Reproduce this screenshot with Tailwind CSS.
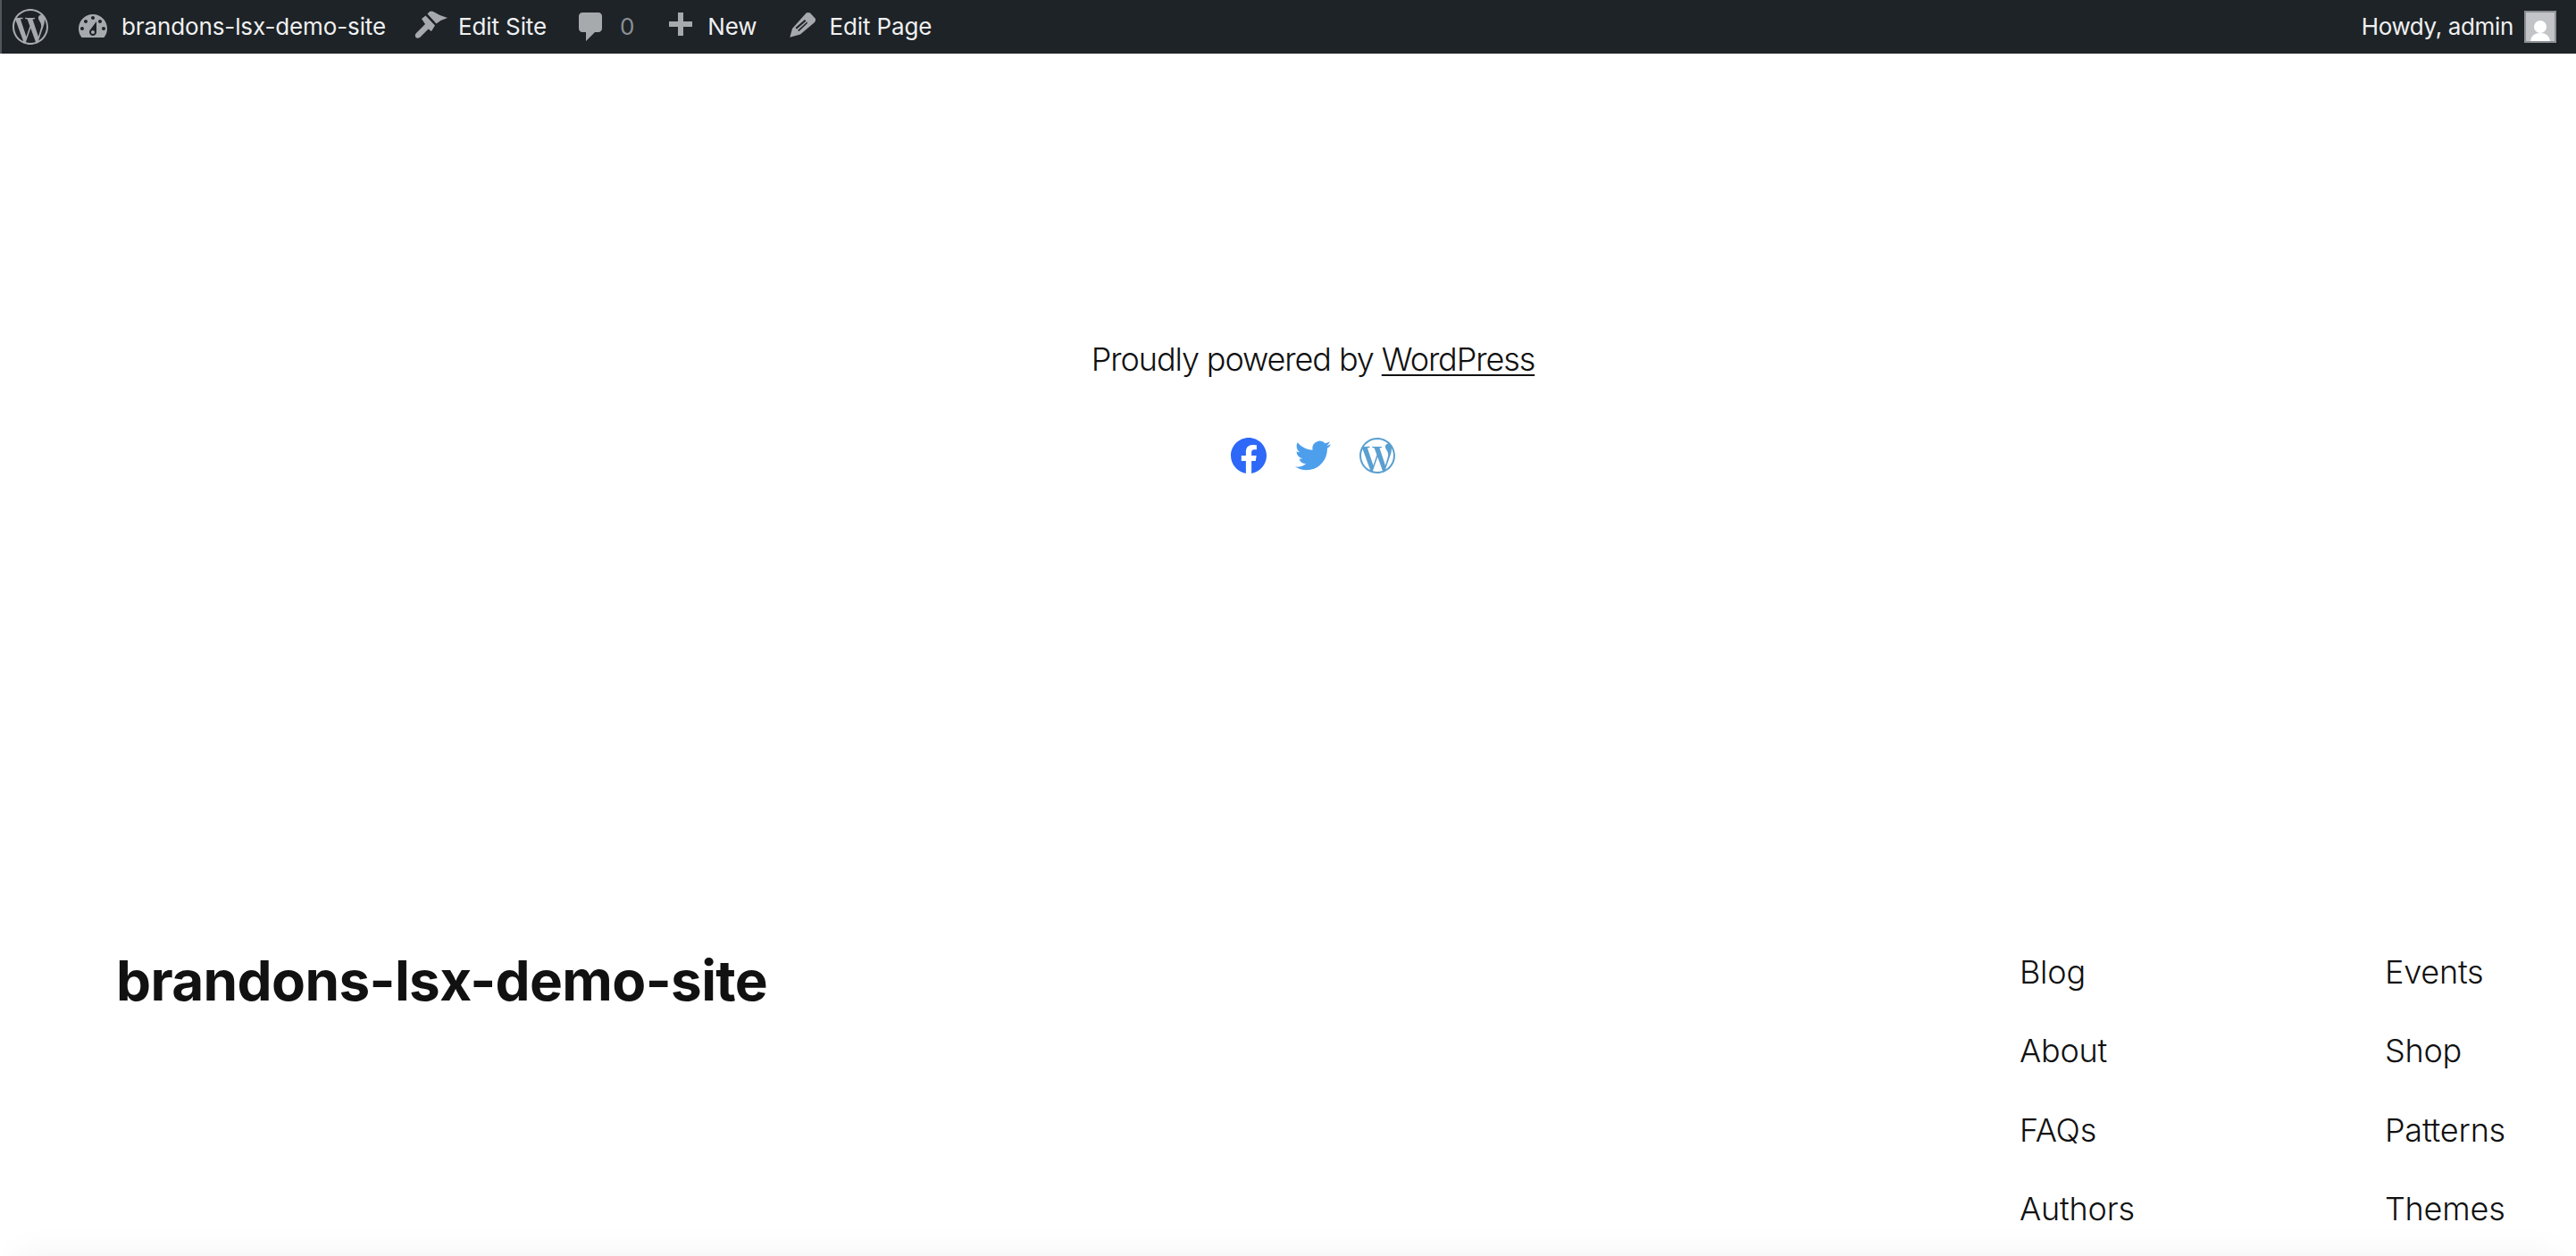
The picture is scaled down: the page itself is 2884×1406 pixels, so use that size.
<!DOCTYPE html>
<html lang="en">
<head>
  <meta charset="UTF-8" />
  <title>brandons-lsx-demo-site</title>
  <script src="https://cdn.jsdelivr.net/npm/@tailwindcss/browser@4"></script>
</head>
<body class="bg-white font-['Inter',sans-serif] text-[#111111]">
<div class="h-[1406px] overflow-hidden">

  <!-- admin bar -->
  <header class="h-[60px] bg-[#1d2327] flex justify-between items-center text-[26px] tracking-[-0.12px] text-[#f0f0f1] border-l-2 border-[#50565b]">
    <nav class="flex items-center">
      <svg class="w-[40px] h-[40px] ml-[12px] fill-[#a7aaad]" viewBox="0 0 24 24"><path d="M21.469 6.825c.84 1.537 1.318 3.3 1.318 5.175 0 3.979-2.156 7.456-5.363 9.325l3.295-9.527c.615-1.54.82-2.771.82-3.864 0-.405-.026-.78-.07-1.11m-7.981.105c.647-.03 1.232-.105 1.232-.105.582-.075.514-.93-.067-.899 0 0-1.755.135-2.88.135-1.064 0-2.85-.15-2.85-.15-.585-.03-.661.855-.075.885 0 0 .54.061 1.125.09l1.68 4.605-2.37 7.08L5.354 6.9c.649-.03 1.234-.1 1.234-.1.585-.075.516-.93-.065-.896 0 0-1.746.138-2.874.138-.2 0-.438-.008-.69-.015C4.911 3.15 8.235 1.215 12 1.215c2.809 0 5.365 1.072 7.286 2.833-.046-.003-.091-.009-.141-.009-1.06 0-1.812.923-1.812 1.914 0 .89.513 1.643 1.06 2.531.411.72.89 1.643.89 2.977 0 .915-.354 2-.821 3.479l-1.075 3.585-3.9-11.61.001.014zM12 22.784c-1.059 0-2.081-.153-3.048-.437l3.237-9.406 3.315 9.087c.024.053.05.101.078.149-1.12.393-2.325.609-3.582.609M1.211 12c0-1.564.336-3.05.935-4.39L7.29 21.709C3.694 19.96 1.212 16.271 1.211 12M12 0C5.385 0 0 5.385 0 12s5.385 12 12 12 12-5.385 12-12S18.615 0 12 0"/></svg>
      <a class="flex items-center ml-[30px]">
        <svg class="w-[40px] h-[40px] fill-[#a7aaad]" viewBox="0 0 20 20"><path fill-rule="evenodd" d="M3.76 16h12.48c1.1-1.37 1.76-3.11 1.76-5 0-4.42-3.58-8-8-8s-8 3.58-8 8c0 1.89.66 3.63 1.76 5zM10 4c.55 0 1 .45 1 1s-.45 1-1 1-1-.45-1-1 .45-1 1-1zM6 6c.55 0 1 .45 1 1s-.45 1-1 1-1-.45-1-1 .45-1 1-1zm8 0c.55 0 1 .45 1 1s-.45 1-1 1-1-.45-1-1 .45-1 1-1zm-5.37 5.55L12 7v6c0 1.1-.9 2-2 2s-2-.9-2-2c0-.57.24-1.08.63-1.45zM4 10c.55 0 1 .45 1 1s-.45 1-1 1-1-.45-1-1 .45-1 1-1zm12 0c.55 0 1 .45 1 1s-.45 1-1 1-1-.45-1-1 .45-1 1-1zm-5 3c0-.55-.45-1-1-1s-1 .45-1 1 .45 1 1 1 1-.45 1-1z"/></svg>
        <span class="ml-[12px] mb-[2px]">brandons-lsx-demo-site</span>
      </a>
      <a class="flex items-center ml-[19px]">
        <svg class="w-[60px] h-[60px] fill-[#a7aaad]" viewBox="0 0 60 60"><path d="M27.5 15.5 30 13q2-1 5 .5 7 4.500 15 6.500-7 2-12.500 6.500z"/><path d="M21 21l4.500-3.500L36 28.500 32 35l-3.500-2.500L19 42q-4 2-5-1-1-2 1-4l10-10z"/></svg>
        <span class="ml-[2px] mb-[2px]">Edit Site</span>
      </a>
      <a class="flex items-center ml-[30px]">
        <svg class="w-[40px] h-[40px] fill-[#a7aaad]" viewBox="0 0 20 20"><path d="M5 2h9c1.1 0 2 .9 2 2v7c0 1.1-.9 2-2 2h-2l-5 5v-5H5c-1.1 0-2-.9-2-2V4c0-1.1.9-2 2-2z"/></svg>
        <span class="ml-[12px] mb-[2px] text-[#8c8f94]">0</span>
      </a>
      <a class="flex items-center ml-[31px]">
        <svg class="w-[40px] h-[40px] fill-[#a7aaad]" viewBox="0 0 20 20"><path d="M17 7v3h-5v5H9v-5H4V7h5V2h3v5h5z"/></svg>
        <span class="ml-[11px] mb-[2px]">New</span>
      </a>
      <a class="flex items-center ml-[23px]">
        <svg class="w-[60px] h-[60px] fill-[#a7aaad]" viewBox="0 0 60 60"><path fill-rule="evenodd" d="M13.300 41.700 16 32l15.700-17.500q1.500-1 4.300 0l6 6.500q.5 2-1 4L25 38.500zM19.500 31 30 22l1.500 1.500L21 32.500zM22 34l10.500-9.500L33 26 23.500 35z"/></svg>
        <span class="ml-[-2px] mb-[2px]">Edit Page</span>
      </a>
    </nav>
    <a class="flex items-center mr-[22px]">
      <span class="tracking-[-0.35px] mb-[2px]">Howdy, admin</span>
      <span class="ml-[12px] w-[36px] h-[36px] border-2 border-[#8c8f94] bg-[#c3c4c7] overflow-hidden">
        <svg class="w-full h-full fill-white" viewBox="0 0 32 32"><circle cx="16" cy="16" r="7"/><path d="M5 32q1-9 11-9t11 9z"/></svg>
      </span>
    </a>
  </header>

  <!-- footer credit -->
  <section class="h-[960px] pl-[56px] pt-[320px] flex flex-col items-center">
    <p class="text-[36px] leading-[44px] font-light tracking-[-1.1px]">Proudly powered by <a class="underline decoration-2 underline-offset-4">WordPress</a></p>
    <div class="flex items-center gap-[32px] mt-[66px]">
      <svg class="w-[40px] h-[40px] fill-[#2d68f8]" viewBox="0 0 24 24"><path d="M24 12.073c0-6.627-5.373-12-12-12s-12 5.373-12 12c0 5.99 4.388 10.954 10.125 11.854v-8.385H7.078v-3.47h3.047V9.43c0-3.007 1.792-4.669 4.533-4.669 1.312 0 2.686.235 2.686.235v2.953H15.83c-1.491 0-1.956.925-1.956 1.874v2.25h3.328l-.532 3.47h-2.796v8.385C19.612 23.027 24 18.062 24 12.073z"/></svg>
      <svg class="w-[40px] h-[40px] fill-[#4d9fec]" viewBox="0 0 24 24"><path d="M23.953 4.57a10 10 0 01-2.825.775 4.958 4.958 0 002.163-2.723c-.951.555-2.005.959-3.127 1.184a4.92 4.92 0 00-8.384 4.482C7.69 8.095 4.067 6.13 1.64 3.162a4.822 4.822 0 00-.666 2.475c0 1.71.87 3.213 2.188 4.096a4.904 4.904 0 01-2.228-.616v.06a4.923 4.923 0 003.946 4.827 4.996 4.996 0 01-2.212.085 4.936 4.936 0 004.604 3.417 9.867 9.867 0 01-6.102 2.105c-.39 0-.779-.023-1.17-.067a13.995 13.995 0 007.557 2.209c9.053 0 13.998-7.496 13.998-13.985 0-.21 0-.42-.015-.63A9.935 9.935 0 0024 4.59z"/></svg>
      <svg class="w-[40px] h-[40px] fill-[#5a9fd0]" viewBox="0 0 24 24"><path d="M21.469 6.825c.84 1.537 1.318 3.3 1.318 5.175 0 3.979-2.156 7.456-5.363 9.325l3.295-9.527c.615-1.54.82-2.771.82-3.864 0-.405-.026-.78-.07-1.11m-7.981.105c.647-.03 1.232-.105 1.232-.105.582-.075.514-.93-.067-.899 0 0-1.755.135-2.88.135-1.064 0-2.85-.15-2.85-.15-.585-.03-.661.855-.075.885 0 0 .54.061 1.125.09l1.68 4.605-2.37 7.08L5.354 6.9c.649-.03 1.234-.1 1.234-.1.585-.075.516-.93-.065-.896 0 0-1.746.138-2.874.138-.2 0-.438-.008-.69-.015C4.911 3.15 8.235 1.215 12 1.215c2.809 0 5.365 1.072 7.286 2.833-.046-.003-.091-.009-.141-.009-1.06 0-1.812.923-1.812 1.914 0 .89.513 1.643 1.06 2.531.411.72.89 1.643.89 2.977 0 .915-.354 2-.821 3.479l-1.075 3.585-3.9-11.61.001.014zM12 22.784c-1.059 0-2.081-.153-3.048-.437l3.237-9.406 3.315 9.087c.024.053.05.101.078.149-1.12.393-2.325.609-3.582.609M1.211 12c0-1.564.336-3.05.935-4.39L7.29 21.709C3.694 19.96 1.212 16.271 1.211 12M12 0C5.385 0 0 5.385 0 12s5.385 12 12 12 12-5.385 12-12S18.615 0 12 0"/></svg>
    </div>
  </section>

  <!-- site footer -->
  <footer class="flex justify-between pl-[130px] pr-[79px] h-[386px]">
    <h1 class="text-[62px] leading-[72px] font-bold tracking-[-0.01em] mt-[42px]">brandons-lsx-demo-site</h1>
    <div class="flex text-[36px] leading-[44px] font-light tracking-[-0.2px] pt-[46px]">
      <ul class="flex flex-col gap-[44.4px] w-[409px]">
        <li>Blog</li>
        <li>About</li>
        <li>FAQs</li>
        <li>Authors</li>
      </ul>
      <ul class="flex flex-col gap-[44.4px]">
        <li>Events</li>
        <li>Shop</li>
        <li>Patterns</li>
        <li>Themes</li>
      </ul>
    </div>
  </footer>

  <!-- next section only shows its shadow -->
  <div class="mx-[20px] h-[100px] bg-white shadow-[0_0_40px_rgba(0,0,0,0.06)]"></div>
</div>
</body>
</html>
